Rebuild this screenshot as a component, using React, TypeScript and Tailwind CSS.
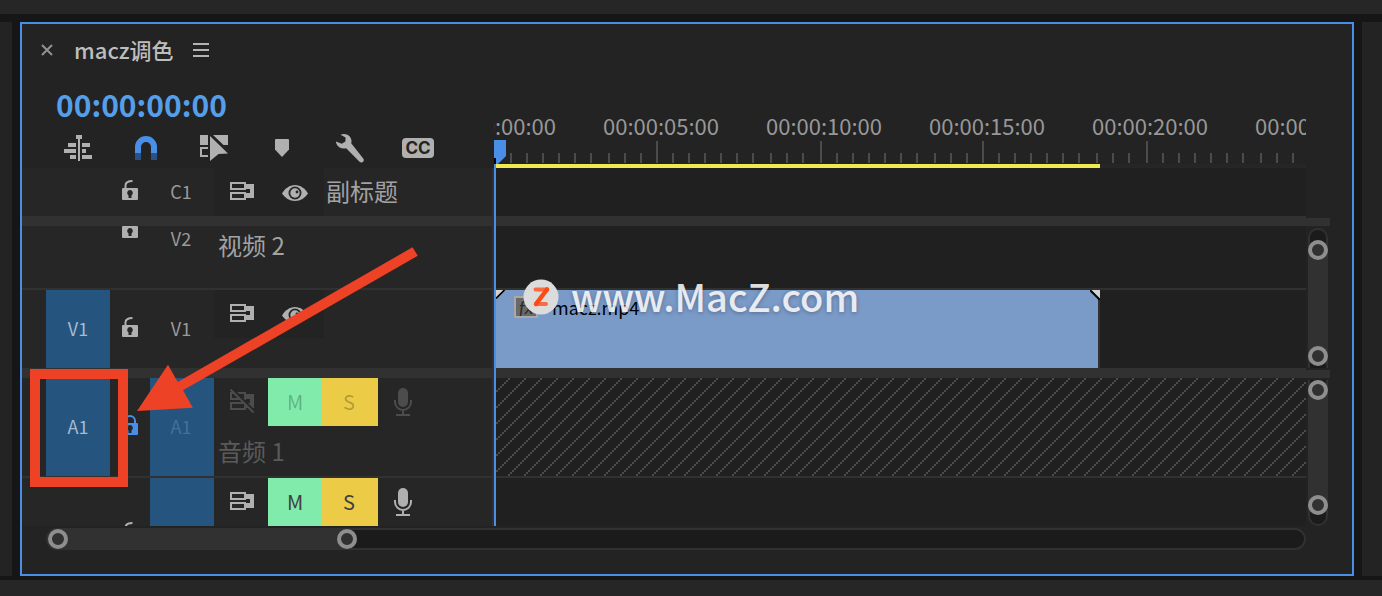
import type { ReactNode } from 'react';
import clsx from 'clsx';

const RULER_LABELS = ['00:00:00:00', '00:00:05:00', '00:00:10:00', '00:00:15:00', '00:00:20:00', '00:00:25:00'];

// left edges of the ruler marks, snapped to even pixels
const ticks = RULER_LABELS.flatMap((_, major) =>
  Array.from({ length: 10 }, (_, minor) => ({
    x: 2 * Math.floor((163 * major) / 2) + 2 * Math.floor((16.3 * minor) / 2),
    major: minor === 0,
  })),
).slice(1);

function CloseIcon() {
  return (
    <svg width="12" height="12" viewBox="0 0 12 12" stroke="#929292" strokeWidth="2">
      <path d="M1 1l10 10M11 1L1 11" />
    </svg>
  );
}

function MenuIcon() {
  return (
    <svg width="16" height="14" viewBox="0 0 16 14" fill="#b4b4b4">
      <path d="M0 0h16v2H0zM0 6h16v2H0zM0 12h16v2H0z" />
    </svg>
  );
}

function NestIcon() {
  return (
    <svg width="28" height="26" viewBox="0 0 28 26" fill="#b0b0b0">
      <path d="M12 0h6v4h-2v22h-2V4h-2zM4 8h8v4H4zM18 8h8v4h-8zM0 14h12v4H0zM18 14h4v4h-4zM6 20h6v4H6zM18 20h10v4H18z" />
    </svg>
  );
}

function MagnetIcon() {
  return (
    <svg width="22" height="24" viewBox="0 0 22 24">
      <path d="M0 17V11a11 11 0 0 1 22 0v6h-6v-6a5 5 0 0 0-10 0v6z" fill="#4a8fe7" />
      <path d="M0 17h6v7H0zM16 17h6v7h-6z" fill="#2a5288" />
    </svg>
  );
}

function LinkedSelectionIcon() {
  return (
    <svg width="28" height="26" viewBox="0 0 28 26" fill="#b0b0b0">
      <path d="M0 0h8v10H0zM13 0h15v10h-4.500zM0 12h8v2H2v6h6v2H0z" />
      <path d="M10 1l18 17.500-9.500.5L10 26z" />
    </svg>
  );
}

function MarkerIcon() {
  return (
    <svg width="14" height="18" viewBox="0 0 14 18" fill="#b0b0b0">
      <path d="M1 0h12a1 1 0 0 1 1 1v9.500L7 18l-7-7.500V1a1 1 0 0 1 1-1z" />
    </svg>
  );
}

function WrenchIcon() {
  return (
    <svg width="28" height="29" viewBox="0 0 28 29" fill="#b0b0b0">
      <path d="M4.500.7C8.500-.8 13 .6 14.800 4.200c.8 1.700.9 3.400.4 5.100L27.200 24.600c1.100 1.500.5 2.900-.5 3.500-1.100.8-2.300.6-3.200-.3L10.200 14.300C5.800 15.400 1.800 13.200.4 9.700c-.3-.8-.4-1.500-.4-2.200l5.800 2.300 3.600-2.200.2-4z" />
    </svg>
  );
}

function SyncIcon({ off = false }: { off?: boolean }) {
  const color = off ? '#4c4c4c' : '#b0b0b0';
  return (
    <svg width="24" height="24" viewBox="0 -3 24 24" className="shrink-0">
      <path
        fill={color}
        fillRule="evenodd"
        d="M0 0h16v2h8v14h-8v2H0v-8h16v1h4V7h-4v1H0zM2 2v4h12V2zM2 12v4h12v-4z"
      />
      {off && (
        <>
          <path d="M2-3l24 24" stroke="#262626" strokeWidth="3" />
          <path d="M.5-2.500l23 23" stroke={color} strokeWidth="2" />
        </>
      )}
    </svg>
  );
}

function EyeIcon() {
  return (
    <svg width="26" height="16" viewBox="0 0 26 16">
      <path d="M0 8.500C3 3.500 7.500 0 13 0s10 3.500 13 8.500C23 13 18.500 16 13 16S3 13 0 8.500z" fill="#b0b0b0" />
      <circle cx="13" cy="8" r="6.500" fill="#262626" />
      <circle cx="13" cy="8" r="4.700" fill="#b0b0b0" />
      <circle cx="15" cy="7" r="1.400" fill="#262626" />
    </svg>
  );
}

function LockIcon({ locked = false }: { locked?: boolean }) {
  const color = locked ? '#4a8fe7' : '#b0b0b0';
  return (
    <svg width="16" height="20" viewBox="0 0 16 20">
      <path
        d={locked ? 'M3 9V6a5 5 0 0 1 10 0v3' : 'M3.500 9V5.500C3.500 2.500 6 1 10.500 1'}
        fill="none"
        stroke={color}
        strokeWidth="2"
      />
      <path
        fill={color}
        fillRule="evenodd"
        d="M1 8h14a1 1 0 0 1 1 1v10a1 1 0 0 1-1 1H1a1 1 0 0 1-1-1V9a1 1 0 0 1 1-1zM8 10a3 3 0 0 0-1.500 5.500V18h3v-2.500A3 3 0 0 0 8 10z"
      />
    </svg>
  );
}

function MicIcon({ off = false }: { off?: boolean }) {
  const color = off ? '#4c4c4c' : '#b0b0b0';
  return (
    <svg width="18" height="28" viewBox="0 0 18 28">
      <rect x="4" y="0" width="10" height="19" rx="5" fill={color} />
      <path d="M1 12v2a8 8 0 0 0 16 0v-2M9 22v4M2 27h14" fill="none" stroke={color} strokeWidth="2" />
    </svg>
  );
}

function ToolButton({ label, children }: { label: string; children: ReactNode }) {
  return (
    <button type="button" aria-label={label} className="flex h-6 w-[68px] shrink-0 items-center justify-center">
      {children}
    </button>
  );
}

function LockButton({ locked = false }: { locked?: boolean }) {
  return (
    <button type="button" aria-label="Toggle track lock" className="flex w-10 shrink-0 justify-center pb-1">
      <LockIcon locked={locked} />
    </button>
  );
}

function SyncButton({ off = false }: { off?: boolean }) {
  return (
    <button
      type="button"
      aria-label="Toggle sync lock"
      className="flex h-12 w-[54px] items-center justify-center pb-[2px] pl-[2px]"
    >
      <SyncIcon off={off} />
    </button>
  );
}

function EyeButton() {
  return (
    <button
      type="button"
      aria-label="Toggle track output"
      className="flex h-12 w-14 items-center justify-center pr-[2px] pt-[2px]"
    >
      <EyeIcon />
    </button>
  );
}

function AudioControls({ off = false }: { off?: boolean }) {
  const letter = clsx('flex h-12 items-center justify-center text-xl', off ? 'text-black/25' : 'text-[#404040]');
  return (
    <div className="flex h-12">
      <SyncButton off={off} />
      <button type="button" aria-label="Mute track" className={clsx(letter, 'w-[54px] bg-[#80ebab]')}>
        M
      </button>
      <button type="button" aria-label="Solo track" className={clsx(letter, 'w-14 bg-[#eccc47] pr-[2px]')}>
        S
      </button>
      <button type="button" aria-label="Voice-over record" className="flex w-[50px] items-center justify-center">
        <MicIcon off={off} />
      </button>
    </div>
  );
}

function Knob({ label }: { label: string }) {
  return (
    <button
      type="button"
      aria-label={label}
      className="size-5 shrink-0 rounded-full border-4 border-[#8e8e8e] bg-[#313131]"
    />
  );
}

function TrackHeaders() {
  const name = 'flex w-16 shrink-0 items-center justify-center self-stretch pb-[2px] pr-[2px] text-lg text-[#9a9a9a]';
  const source =
    'flex w-16 shrink-0 items-center justify-center self-stretch bg-[#25557f] pb-[2px] text-lg text-[#a6bbd0]';
  return (
    <div className="w-[470px] shrink-0 bg-[#262626]">
      <div className="flex h-12 items-center pl-[88px]">
        <LockButton />
        <span className={name}>C1</span>
        <div className="flex bg-[#232323]">
          <SyncButton />
          <EyeButton />
        </div>
        <span className="pb-[2px] pl-[2px] text-2xl text-[#a2a2a2]">副标题</span>
      </div>
      <div className="h-[10px] bg-[#313131]" />

      {/* scrolled partly out of view, so its lock is cut off at the top */}
      <div className="flex h-16 items-start overflow-hidden border-b-2 border-[#313131] pl-[88px]">
        <div className="-mt-2">
          <LockButton />
        </div>
        <span className="w-16 pr-[2px] text-center text-lg leading-6 text-[#9a9a9a]">V2</span>
        <span className="pl-1 text-2xl leading-[38px] text-[#a2a2a2]">视频 2</span>
      </div>

      <div className="flex h-[78px] items-center pl-6">
        <button type="button" className={source}>
          V1
        </button>
        <LockButton />
        <span className={name}>V1</span>
        <div className="flex self-start bg-[#232323]">
          <SyncButton />
          <EyeButton />
        </div>
      </div>
      <div className="h-[10px] bg-[#313131]" />

      <div className="flex h-[100px] items-center border-b-2 border-[#313131] pl-6">
        <button type="button" className={source}>
          A1
        </button>
        <LockButton locked />
        <button type="button" className="w-16 self-stretch bg-[#25557f] pb-[2px] pr-[2px] text-lg text-[#44719a]">
          A1
        </button>
        <div className="self-start">
          <AudioControls off />
          <p className="pl-1 text-2xl leading-[50px] text-[#5a5a5a]">音频 1</p>
        </div>
      </div>

      <div className="flex h-12 items-end overflow-hidden pl-[88px]">
        <div className="-mb-5">
          <LockButton />
        </div>
        <div className="w-16 self-stretch bg-[#25557f]" />
        <AudioControls />
      </div>
    </div>
  );
}

function Clip() {
  return (
    <div className="relative ml-[2px] flex h-[78px] w-[604px] items-start border-r-2 border-[#313131] bg-[#7a9ac8] pl-[18px] pt-[6px]">
      <svg width="10" height="10" viewBox="0 0 10 10" className="absolute left-0 top-0">
        <path d="M0 0h8L0 8z" fill="#d2d2d2" />
        <path d="M8.500 0L0 8.500" stroke="#000" strokeWidth="1.700" />
      </svg>
      <svg width="10" height="10" viewBox="0 0 10 10" className="absolute -right-[2px] top-0">
        <path d="M0 0h10v10z" fill="#d2d2d2" />
        <path d="M0 0l10 10" stroke="#000" strokeWidth="2" />
      </svg>
      <span className="flex h-[22px] w-6 items-center justify-center border-2 border-[#aaa8a8] bg-[#696969] font-[Lato] text-lg italic leading-none text-[#2a2a2a]">
        fx
      </span>
      <span className="pl-[14px] text-lg leading-[22px] text-black">macz.mp4</span>
    </div>
  );
}

function TrackContent() {
  return (
    <div className="min-w-0 flex-1 bg-[#202020]">
      <div className="h-12" />
      <div className="h-[10px] bg-[#313131]" />
      <div className="h-16 border-b-2 border-[#313131]" />
      <Clip />
      <div className="h-[10px] bg-[#313131]" />
      <div className="h-[100px] border-b-2 border-[#313131]">
        <svg className="block h-full w-full" shapeRendering="crispEdges">
          <defs>
            <pattern id="locked" width="16" height="16" patternUnits="userSpaceOnUse">
              {Array.from({ length: 8 }, (_, i) => (
                <rect key={i} x={14 - 2 * i} y={2 * i} width="2" height="2" fill="#4b4b4b" />
              ))}
            </pattern>
          </defs>
          <rect width="100%" height="100%" fill="url(#locked)" />
        </svg>
      </div>
      <div className="h-12" />
    </div>
  );
}

function VerticalScrollbars() {
  return (
    <div className="flex w-6 shrink-0 flex-col pt-[50px]">
      <div className="h-2 bg-[#313131]" />
      <div className="mx-[2px] mb-[2px] mt-[2px] flex h-[140px] flex-col rounded-t-full border-2 border-b-0 border-[#313131] bg-[#1b1b1b] pt-[10px]">
        <div className="-mx-[2px] flex h-[126px] flex-col justify-between rounded-full bg-[#313131]">
          <Knob label="Video scroll start" />
          <Knob label="Video scroll end" />
        </div>
      </div>
      <div className="h-2 bg-[#313131]" />
      <div className="mx-[2px] mt-[2px] flex h-[146px] flex-col rounded-b-full border-2 border-t-0 border-[#313131] bg-[#1b1b1b]">
        <div className="-mx-[2px] flex h-[135px] flex-col justify-between rounded-full bg-[#313131]">
          <Knob label="Audio scroll start" />
          <Knob label="Audio scroll end" />
        </div>
      </div>
    </div>
  );
}

function Ruler() {
  return (
    <div className="flex min-w-0 flex-1 flex-col justify-end overflow-hidden">
      <div className="-ml-[54px] flex pb-[2px]">
        {RULER_LABELS.map((label) => (
          <span key={label} className="w-[163px] shrink-0 text-[22px] leading-7 text-[#989898]">
            {label}
          </span>
        ))}
      </div>
      <svg className="block h-[23px] w-full" shapeRendering="crispEdges">
        {ticks.map((tick) => (
          <rect
            key={tick.x}
            x={tick.x}
            y={tick.major ? 0 : 12}
            width="2"
            height={tick.major ? 22 : 10}
            fill="#4b4b4b"
          />
        ))}
      </svg>
      <div className="h-1 bg-[#262626]">
        <div className="ml-[2px] h-full w-[604px] bg-[#eeea50]" />
      </div>
    </div>
  );
}

function Watermark() {
  return (
    <div className="pointer-events-none absolute left-[501px] top-[247px] flex items-center gap-3">
      <svg width="36" height="36" viewBox="0 0 36 36">
        <circle cx="18" cy="18" r="17.500" fill="#dcdcdc" />
        <path d="M12.500 10.500H24M13 25h10" stroke="#fb6a42" strokeWidth="4" strokeLinecap="round" />
        <path d="M24 10.500L13 25" stroke="#fb4a14" strokeWidth="4.500" strokeLinecap="round" />
      </svg>
      <span className="pb-[2px] text-[38px] font-medium leading-[50px] text-white/85 [text-shadow:0_1px_4px_rgba(0,0,0,0.3)]">
        www.MacZ.com
      </span>
    </div>
  );
}

function Annotation() {
  return (
    <svg width="400" height="260" viewBox="22 240 400 260" className="pointer-events-none absolute left-0 top-[216px]">
      <rect x="35" y="374" width="88" height="108" fill="none" stroke="#ed4226" strokeWidth="10" />
      <path d="M137 411L168 364.700l9.700 17.300L412.500 247.300l5.300 8.500L183 390.300l9.800 17.500z" fill="#ed4226" />
    </svg>
  );
}

export default function App() {
  return (
    <div className="flex min-h-screen flex-col bg-[#161616] font-['Noto_Sans_CJK_SC',sans-serif]">
      <div className="h-[14px] bg-[#262626]" />
      <div className="mb-1 mt-2 flex gap-2">
        <div className="w-3 shrink-0 bg-[#232323]" />

        <main className="relative min-w-0 flex-1 border-2 border-[#4a8fe7] bg-[#232323] pb-6">
          <div className="flex h-[52px] items-center pl-[19px]">
            <button type="button" aria-label="Close sequence">
              <CloseIcon />
            </button>
            <h1 className="pb-[2px] pl-[21px] pr-[19px] text-[22px] font-medium text-[#bdbdbd]">macz调色</h1>
            <button type="button" aria-label="Panel menu">
              <MenuIcon />
            </button>
          </div>

          <div className="flex pr-[46px]">
            <div className="w-[472px] shrink-0">
              <p className="pb-1 pl-[34px] text-[30px] font-bold leading-[56px] text-[#559fea]">00:00:00:00</p>
              <div className="mb-2 flex pl-[22px]">
                <ToolButton label="Insert as nest">
                  <NestIcon />
                </ToolButton>
                <ToolButton label="Snap">
                  <MagnetIcon />
                </ToolButton>
                <ToolButton label="Linked selection">
                  <LinkedSelectionIcon />
                </ToolButton>
                <ToolButton label="Add marker">
                  <MarkerIcon />
                </ToolButton>
                <ToolButton label="Timeline settings">
                  <WrenchIcon />
                </ToolButton>
                <ToolButton label="Captions">
                  <span className="flex h-5 w-8 items-center justify-center rounded bg-[#b0b0b0] font-[Inter] text-[17px] font-bold leading-none text-[#232323]">
                    CC
                  </span>
                </ToolButton>
              </div>
            </div>
            <Ruler />
          </div>

          <div className="relative flex pr-[22px]">
            <TrackHeaders />
            <div className="w-[2px] shrink-0 bg-[#313131]" />
            <TrackContent />
            <VerticalScrollbars />
            <div className="absolute bottom-0 left-[472px] top-[-28px] flex flex-col">
              <svg width="12" height="24" viewBox="0 0 12 24" className="shrink-0">
                <path d="M0 0h12v16l-8 8H0z" fill="#4a8fe7" />
                <path d="M0 18h2v6H0z" fill="#000" />
              </svg>
              <div className="w-[2px] flex-1 bg-[#4a8fe7]" />
            </div>
          </div>

          <div className="ml-6 mr-[46px] mt-[2px] flex h-[22px] items-center rounded-full border-2 border-[#313131] bg-[#1b1b1b]">
            <div className="-my-[2px] flex h-[22px] w-[309px] items-center justify-between rounded-full bg-[#313131]">
              <Knob label="Timeline zoom start" />
              <Knob label="Timeline zoom end" />
            </div>
          </div>

          <Watermark />
          <Annotation />
        </main>

        <div className="w-5 shrink-0 bg-[#232323]" />
      </div>
      <div className="h-4 bg-[#262626]" />
    </div>
  );
}
